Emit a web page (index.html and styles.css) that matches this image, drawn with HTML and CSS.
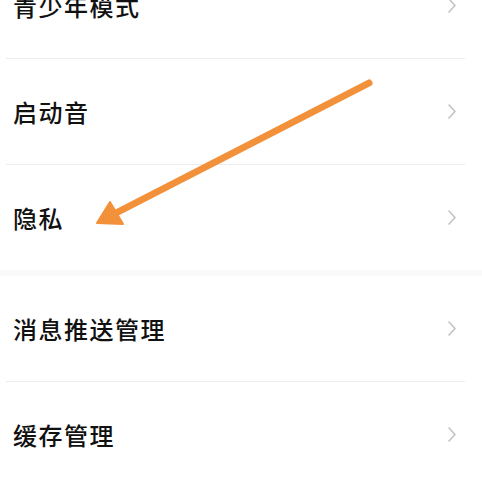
FILE: index.html
```html
<!DOCTYPE html>
<html lang="zh-CN">
  <head>
    <meta charset="UTF-8" />
    <meta name="viewport" content="width=device-width, initial-scale=1.0" />
    <title>设置</title>
    <link rel="stylesheet" href="styles.css">
  </head>
  <body>
    <div class="settings">
      <div class="settings-group first">
        <div class="setting-row">
          <span class="setting-label">青少年模式</span>
          <svg class="chevron" viewBox="0 0 8 15"><path d="M1 1 L7 7.5 L1 14" /></svg>
        </div>
        <div class="setting-row">
          <span class="setting-label">启动音</span>
          <svg class="chevron" viewBox="0 0 8 15"><path d="M1 1 L7 7.5 L1 14" /></svg>
        </div>
        <div class="setting-row">
          <span class="setting-label">隐私</span>
          <svg class="chevron" viewBox="0 0 8 15"><path d="M1 1 L7 7.5 L1 14" /></svg>
        </div>
      </div>

      <div class="settings-gap"></div>

      <div class="settings-group">
        <div class="setting-row">
          <span class="setting-label">消息推送管理</span>
          <svg class="chevron" viewBox="0 0 8 15"><path d="M1 1 L7 7.5 L1 14" /></svg>
        </div>
        <div class="setting-row">
          <span class="setting-label">缓存管理</span>
          <svg class="chevron" viewBox="0 0 8 15"><path d="M1 1 L7 7.5 L1 14" /></svg>
        </div>
      </div>
    </div>

    <!-- 标注箭头 -->
    <svg class="annotation" viewBox="0 0 482 482">
      <line x1="369" y1="83" x2="114" y2="214" />
      <polygon points="97,223 110,202 123,224" />
    </svg>
  </body>
</html>
```

FILE: styles.css
```css
html,
body {
  margin: 0;
  padding: 0;
  background: #ffffff;
  overflow: hidden;
  height: 482px;
}

body {
  position: relative;
  font-family: "Noto Sans CJK SC", "Noto Sans", sans-serif;
  color: #111111;
}

.settings-group.first {
  margin-top: -47px;
}

.setting-row {
  display: flex;
  align-items: center;
  justify-content: space-between;
  height: 105px;
  margin: 0 17px 0 6px;
  padding: 0 9px 0 7px;
  border-bottom: 1px solid #ededed;
}

.settings-group .setting-row:last-child {
  border-bottom: none;
}

.setting-label {
  font-size: 24px;
  font-weight: 500;
  letter-spacing: 1.5px;
  line-height: 1;
}

.chevron {
  width: 8px;
  height: 15px;
  fill: none;
  stroke: #c2c2c2;
  stroke-width: 1.6;
  stroke-linejoin: round;
  stroke-linecap: round;
}

.settings-gap {
  height: 6px;
  background: #fafafa;
}

.annotation {
  position: absolute;
  left: 0;
  top: 0;
  width: 482px;
  height: 482px;
  pointer-events: none;
}

.annotation line {
  stroke: #f2913a;
  stroke-width: 7;
  stroke-linecap: round;
}

.annotation polygon {
  fill: #f2913a;
  stroke: #f2913a;
  stroke-width: 2;
  stroke-linejoin: round;
}
```
